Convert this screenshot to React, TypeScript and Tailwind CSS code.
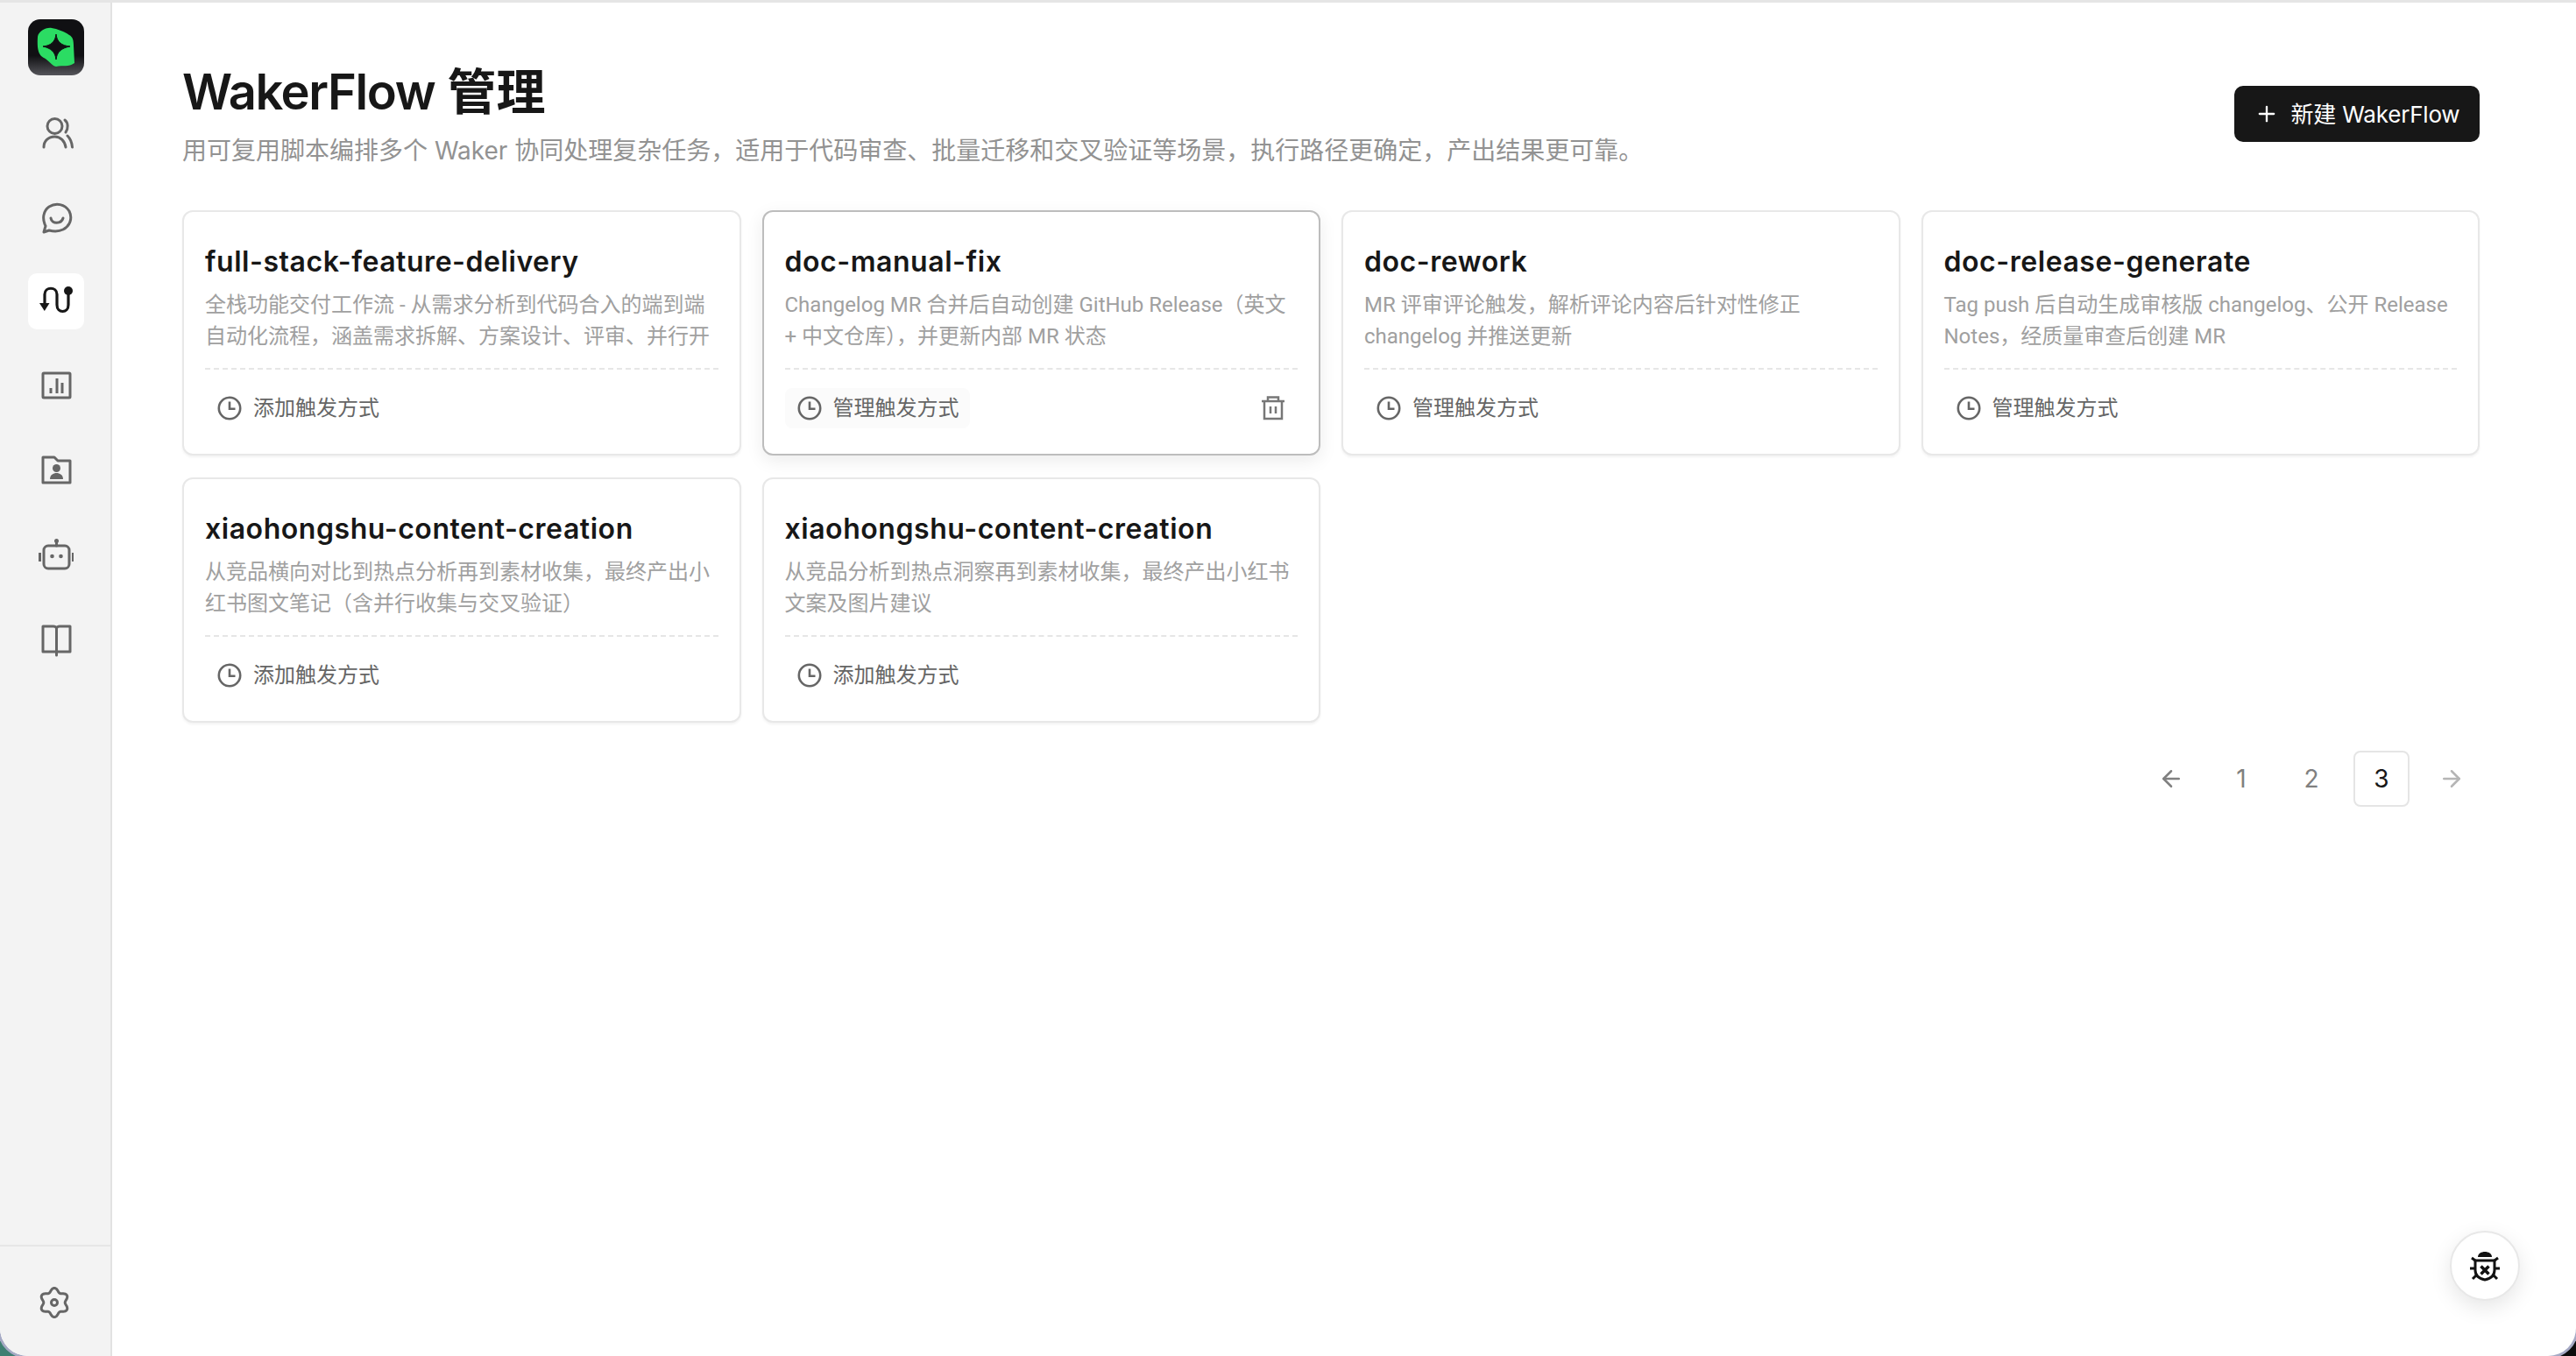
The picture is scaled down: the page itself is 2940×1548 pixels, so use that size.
import React from "react";
import { Plus, ArrowLeft, ArrowRight } from "lucide-react";

const sans = "font-['Inter','Noto_Sans_CJK_SC',sans-serif]";

const Ico = ({ children, vb = "0 0 40 40", s = 40 }: { children: React.ReactNode; vb?: string; s?: number }) => (
  <svg width={s} height={s} viewBox={vb} fill="none" stroke="currentColor" strokeWidth="3" strokeLinecap="round" strokeLinejoin="round">
    {children}
  </svg>
);

const Logo = () => (
  <svg width="64" height="64" viewBox="0 0 64 64" className="block">
    <defs>
      <linearGradient id="lg" x1="0" y1="0" x2="0" y2="1">
        <stop offset="0.65" stopColor="#101013" />
        <stop offset="1" stopColor="#55555a" />
      </linearGradient>
    </defs>
    <rect width="64" height="64" rx="14" fill="url(#lg)" />
    <path d="M11 20C12 14 20 9 27 10C33 11 42 14 47 18C51 20 52 24 52 30L53 50C46 55 40 52 32 54C27 53 24 47 18 44C13 41 10 37 11 20Z" fill="#2bdc63" />
    <path d="M32 17C33 26 38 30 48 31C38 33 33 37 32 46C31 37 26 33 17 31C26 30 31 26 32 17Z" fill="#101013" stroke="#101013" strokeWidth="1" strokeLinejoin="round" />
  </svg>
);

const nav = [
  <Ico key="users"><circle cx="18.5" cy="13" r="8.5" /><path d="M6 37C6 30 11 25 18.500 25C25 25 30 30 31 37" /><path d="M30 6C34 9 34 16 31 20" /><path d="M33 24C36 27 38 31 38.500 37" /></Ico>,
  <Ico key="chat"><path d="M6 37L8 30C4 22 5 13 12 8C20 3 30 5 35 13C39 21 36 30 28 34C22 37 16 36 12 35Z" /><path d="M14 21C15 28 26 28 28 21" /></Ico>,
  null,
  <Ico key="stats"><rect x="5" y="5" width="31" height="28" rx="1" /><path d="M14 22V28M21 11V28M27 16V28" strokeLinecap="butt" /></Ico>,
  <Ico key="folder"><path d="M5 5H18L22 9H36V34H5Z" /><circle cx="20.500" cy="17.500" r="4.500" fill="currentColor" stroke="none" /><path d="M13 30C13 25 17 23 20.500 23C24 23 28 25 28 30Z" fill="currentColor" stroke="none" /></Ico>,
  <Ico key="bot"><rect x="6" y="9" width="29" height="26" rx="5" /><path d="M20.500 9V4" /><circle cx="20.500" cy="3.500" r="2.500" fill="currentColor" stroke="none" /><circle cx="15.500" cy="21" r="2.300" fill="currentColor" stroke="none" /><circle cx="25.500" cy="21" r="2.300" fill="currentColor" stroke="none" /><path d="M1.500 17V27M39.500 17V27" strokeLinecap="butt" /></Ico>,
  <Ico key="book"><path d="M5 5H17C19 5 20 6 20.500 7C21 6 22 5 24 5H36V34H5Z" /><path d="M20.500 7V38" /></Ico>,
];

const FlowIcon = () => (
  <svg width="40" height="40" viewBox="0 0 40 40" fill="none" className="text-[#171717]">
    <path d="M7 22V12C7 3 21 3 21 12V24C21 34 34 34 34 24V10" stroke="currentColor" strokeWidth="3.200" strokeLinecap="round" />
    <path d="M1 22H12.500L6.800 31Z" fill="currentColor" />
    <circle cx="34" cy="8" r="5" fill="currentColor" />
  </svg>
);

const gearPath = (() => {
  const pts: string[] = [];
  for (let i = 0; i < 96; i++) {
    const t = (i / 96) * Math.PI * 2;
    const r = 14.4 + 2.2 * Math.cos(6 * t);
    pts.push(`${(18 + r * Math.sin(t)).toFixed(2)} ${(18 - r * Math.cos(t)).toFixed(2)}`);
  }
  return `M${pts.join("L")}Z`;
})();

const Gear = () => (
  <svg width="36" height="36" viewBox="0 0 36 36" fill="none" stroke="currentColor" strokeWidth="3" strokeLinejoin="round">
    <path d={gearPath} />
    <circle cx="18" cy="18" r="3.500" />
  </svg>
);

const ClockIcon = () => (
  <svg width="28" height="28" viewBox="0 0 28 28" fill="none" stroke="#666" strokeWidth="2.600" className="block shrink-0">
    <circle cx="14" cy="14" r="12.200" />
    <path d="M14 6.500V14.800H20.500" />
  </svg>
);

const Trash = () => (
  <svg width="28" height="28" viewBox="0 0 28 28" fill="none" stroke="#777" strokeWidth="2.500" className="block">
    <path d="M8 6V1.500H20V6M1 6H27M4 6V26H24V6M11 12V20M17 12V20" />
  </svg>
);

const Bug = () => (
  <svg width="36" height="36" viewBox="0 0 36 36" fill="none" stroke="#111" strokeWidth="3">
    <path d="M10 8C10 0 26 0 26 8Z" fill="#111" stroke="none" />
    <path d="M7 12H29V23C29 30 23 33 18 34C13 33 7 30 7 23Z" />
    <path d="M13.500 18.500L22.500 27.500M22.500 18.500L13.500 27.500" strokeWidth="3.500" />
    <path d="M7 12L3 9M29 12L33 9M7 21H1M29 21H35M8 29L4 33M28 29L32 33" />
  </svg>
);

type CardP = { title: string; desc: string; action: string; hover?: boolean };

const cards: CardP[] = [
  { title: "full-stack-feature-delivery", desc: "全栈功能交付工作流 - 从需求分析到代码合入的端到端自动化流程，涵盖需求拆解、方案设计、评审、并行开", action: "添加触发方式" },
  { title: "doc-manual-fix", desc: "Changelog MR 合并后自动创建 GitHub Release（英文 + 中文仓库），并更新内部 MR 状态", action: "管理触发方式", hover: true },
  { title: "doc-rework", desc: "MR 评审评论触发，解析评论内容后针对性修正 changelog 并推送更新", action: "管理触发方式" },
  { title: "doc-release-generate", desc: "Tag push 后自动生成审核版 changelog、公开 Release Notes，经质量审查后创建 MR", action: "管理触发方式" },
  { title: "xiaohongshu-content-creation", desc: "从竞品横向对比到热点分析再到素材收集，最终产出小红书图文笔记（含并行收集与交叉验证）", action: "添加触发方式" },
  { title: "xiaohongshu-content-creation", desc: "从竞品分析到热点洞察再到素材收集，最终产出小红书文案及图片建议", action: "添加触发方式" },
];

const Card = ({ title, desc, action, hover }: CardP) => (
  <div className={hover
    ? "h-[280px] rounded-[12px] border-2 border-[#bdbdbd] bg-white px-[24px] pt-[36px] shadow-[0_6px_20px_rgba(0,0,0,0.08)]"
    : "h-[280px] rounded-[12px] border-2 border-[#e8e8e8] bg-white px-[24px] pt-[36px] shadow-[0_2px_3px_rgba(0,0,0,0.05)]"}>
    <div className="text-[32px] leading-[42px] font-semibold tracking-[0.55px] text-[#171717] whitespace-nowrap">{title}</div>
    <div className="mt-[10px] h-[72px] font-['Roboto','Noto_Sans_CJK_SC',sans-serif] text-[24px] leading-[36px] text-[#a0a0a0]">{desc}</div>
    <div className="mt-[18px] border-t-2 border-dashed border-[#e6e6e6]" />
    <div className="mt-[21px] flex items-center justify-between">
      <div className={hover
        ? "flex h-[46px] items-center gap-[13px] rounded-[8px] bg-[#fbfbfb] pl-[14px] pr-[12px] text-[24px] text-[#666666]"
        : "flex h-[46px] items-center gap-[13px] rounded-[8px] pl-[14px] pr-[12px] text-[24px] text-[#666666]"}>
        <ClockIcon />
        <span>{action}</span>
      </div>
      {hover && <div className="mr-[14px]"><Trash /></div>}
    </div>
  </div>
);

export default function App() {
  return (
    <div className={`relative h-[1548px] w-[2940px] overflow-hidden bg-[linear-gradient(90deg,#3f7f72_0%,#3f7f72_50%,#0d0d0d_50%,#0d0d0d_100%)] ${sans}`}>
      <div className="flex h-[1548px] w-[2940px] overflow-hidden rounded-b-[32px] border-t-[3px] border-[#e5e5e5] bg-white shadow-[0_0_0_3px_#a5a9c4]">
        <aside className="flex h-full w-[128px] shrink-0 flex-col border-r-2 border-[#e2e2e2] bg-[#f3f3f3]">
          <div className="flex flex-1 flex-col items-center pl-[1px] pt-[19px]">
            <Logo />
            <div className="mt-[33px] flex flex-col gap-[32.500px]">
              {nav.map((n, i) =>
                n === null ? (
                  <div key={i} className="flex h-[64px] w-[64px] items-center justify-center rounded-[10px] bg-white">
                    <FlowIcon />
                  </div>
                ) : (
                  <div key={i} className="flex h-[64px] w-[64px] items-center justify-center text-[#666666]">
                    {n}
                  </div>
                )
              )}
            </div>
          </div>
          <div className="flex h-[127px] items-start justify-center border-t-2 border-[#e6e6e6] pr-[2px] pt-[46px] text-[#666666]">
            <Gear />
          </div>
        </aside>
        <main className="relative flex-1 pl-[80px] pr-[110px] pt-[66px]">
          <div className="flex items-start justify-between">
            <div>
              <h1 className="text-[56px] leading-[72px] font-semibold text-[#171717]">
                <span className="tracking-[-1.4px]">WakerFlow</span> 管理
              </h1>
              <p className="mt-[11px] text-[28px] leading-[40px] text-[#929292]">
                用可复用脚本编排多个 Waker 协同处理复杂任务，适用于代码审查、批量迁移和交叉验证等场景，执行路径更确定，产出结果更可靠。
              </p>
            </div>
            <button className="mt-[29px] flex h-[64px] w-[280px] items-center justify-center gap-[14px] rounded-[10px] bg-[#171717] text-[26px] tracking-[-0.2px] text-white">
              <Plus size={28} strokeWidth={2} />
              <span>新建 WakerFlow</span>
            </button>
          </div>
          <div className="mt-[48px] grid grid-cols-4 gap-x-[24px] gap-y-[25px]">
            {cards.map((c, i) => <Card key={i} {...c} />)}
          </div>
          <div className="mt-[32px] flex justify-end gap-[16px] text-[28px] text-[#808080]">
            <div className="flex h-[64px] w-[64px] items-center justify-center"><ArrowLeft size={30} strokeWidth={2} /></div>
            <div className="flex h-[64px] w-[64px] items-center justify-center">1</div>
            <div className="flex h-[64px] w-[64px] items-center justify-center">2</div>
            <div className="flex h-[64px] w-[64px] items-center justify-center rounded-[8px] border-2 border-[#e5e5e5] text-[#171717]">3</div>
            <div className="flex h-[64px] w-[64px] items-center justify-center text-[#b5b5b5]"><ArrowRight size={30} strokeWidth={2} /></div>
          </div>
          <div className="absolute bottom-[63px] right-[64px] flex h-[80px] w-[80px] items-center justify-center rounded-full border-2 border-[#e8e8e8] bg-white shadow-[0_8px_24px_rgba(0,0,0,0.1)]">
            <Bug />
          </div>
        </main>
      </div>
    </div>
  );
}
